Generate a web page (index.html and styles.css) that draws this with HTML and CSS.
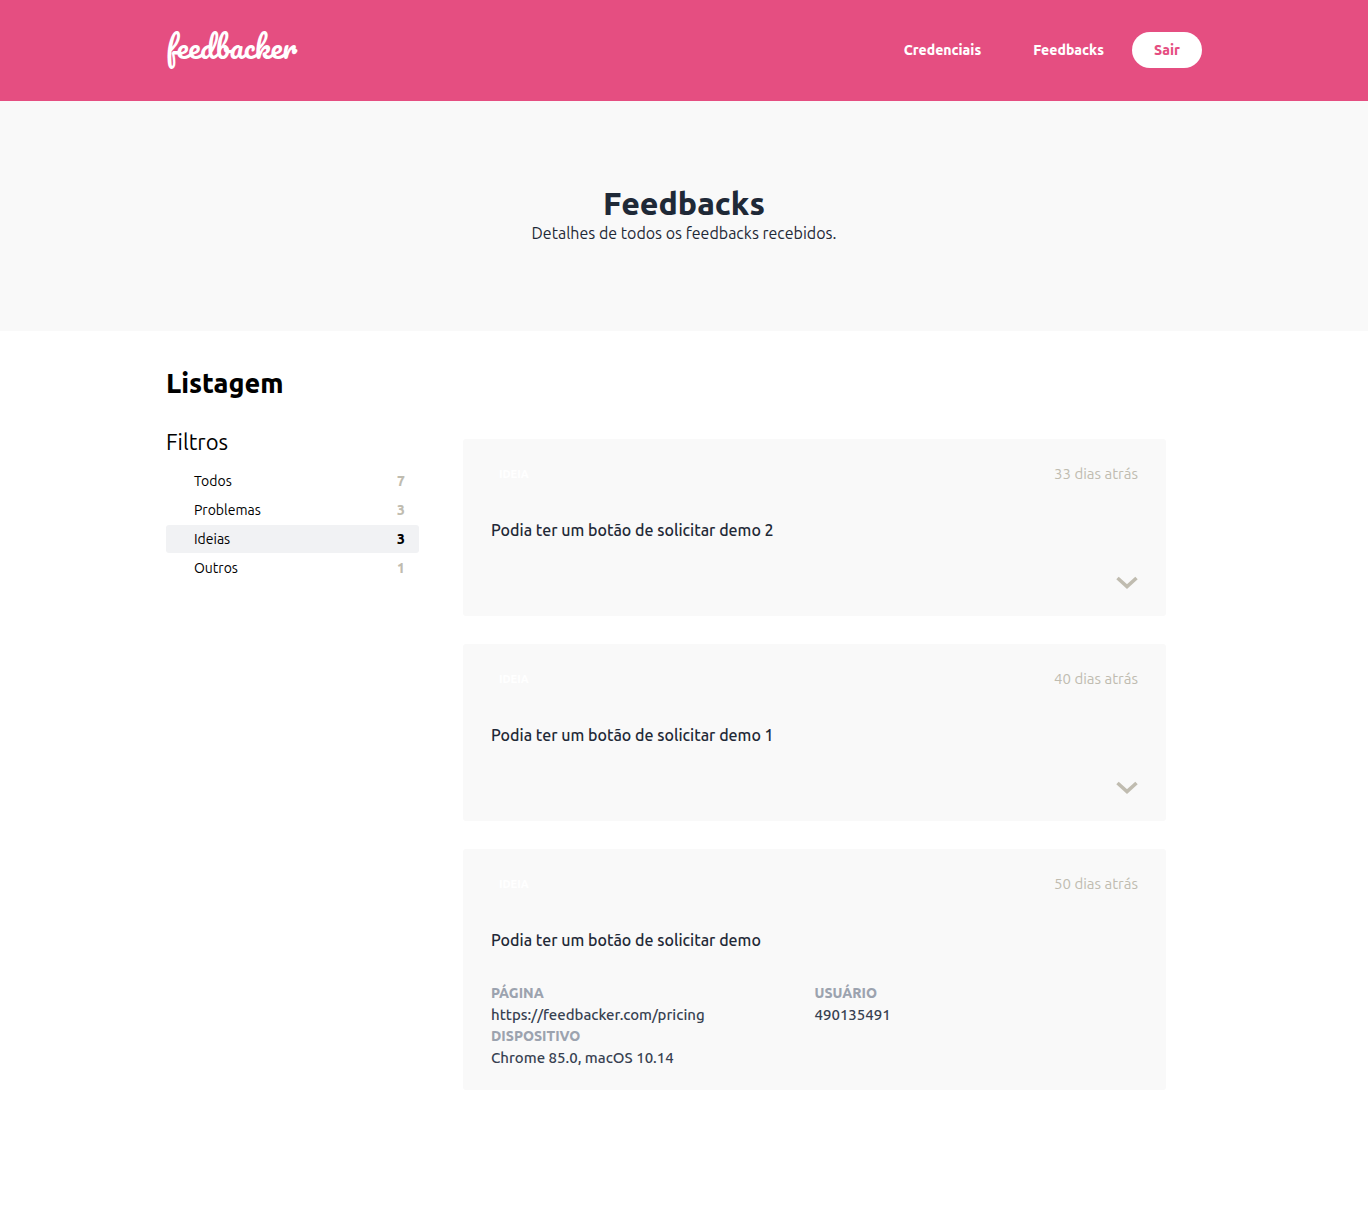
FILE: index.html
```html
<!DOCTYPE html>
<html lang="pt-BR">
<head>
  <meta charset="utf-8">
  <meta name="viewport" content="width=device-width, initial-scale=1">
  <title>Feedbacker</title>
  <link rel="stylesheet" href="styles.css">
</head>
<body>
  <header class="topbar">
    <div class="container topbar-inner">
      <a class="logo" href="#">feedbacker</a>
      <nav class="nav">
        <a class="nav-link" href="#">Credenciais</a>
        <a class="nav-link" href="#">Feedbacks</a>
        <button class="logout" type="button">Sair</button>
      </nav>
    </div>
  </header>

  <section class="hero">
    <h1 class="hero-title">Feedbacks</h1>
    <p class="hero-text">Detalhes de todos os feedbacks recebidos.</p>
  </section>

  <main class="container">
    <h2 class="list-title">Listagem</h2>
    <div class="layout">
      <aside>
        <h3 class="filters-title">Filtros</h3>
        <ul class="filters">
          <li><button class="filter" type="button"><span>Todos</span><span class="count">7</span></button></li>
          <li><button class="filter" type="button"><span>Problemas</span><span class="count">3</span></button></li>
          <li><button class="filter active" type="button"><span>Ideias</span><span class="count">3</span></button></li>
          <li><button class="filter" type="button"><span>Outros</span><span class="count">1</span></button></li>
        </ul>
      </aside>

      <div class="cards">
        <article class="card">
          <div class="card-head"><span class="badge">IDEIA</span><span class="date">33 dias atrás</span></div>
          <p class="message">Podia ter um botão de solicitar demo 2</p>
          <button class="toggle" type="button" aria-label="Ver detalhes">
            <svg width="22" height="14" viewBox="0 0 22 14"><path d="M1.5 2 11 10.500 20.500 2" fill="none" stroke="currentColor" stroke-width="3.600"/></svg>
          </button>
        </article>

        <article class="card">
          <div class="card-head"><span class="badge">IDEIA</span><span class="date">40 dias atrás</span></div>
          <p class="message">Podia ter um botão de solicitar demo 1</p>
          <button class="toggle" type="button" aria-label="Ver detalhes">
            <svg width="22" height="14" viewBox="0 0 22 14"><path d="M1.5 2 11 10.500 20.500 2" fill="none" stroke="currentColor" stroke-width="3.600"/></svg>
          </button>
        </article>

        <article class="card">
          <div class="card-head"><span class="badge">IDEIA</span><span class="date">50 dias atrás</span></div>
          <p class="message">Podia ter um botão de solicitar demo</p>
          <dl class="details">
            <div><dt>PÁGINA</dt><dd>https://feedbacker.com/pricing</dd></div>
            <div><dt>USUÁRIO</dt><dd>490135491</dd></div>
            <div><dt>DISPOSITIVO</dt><dd>Chrome 85.0, macOS 10.14</dd></div>
          </dl>
        </article>
      </div>
    </div>
  </main>
</body>
</html>
```

FILE: styles.css
```css
* {
  box-sizing: border-box;
}

body,
h1,
h2,
h3,
p,
ul,
dl,
dd {
  margin: 0;
}

body {
  background: #fff;
  color: #000;
  font-family: Ubuntu, "Noto Sans", sans-serif;
  font-size: 14px;
  line-height: 22px;
}

button {
  border: 0;
  background: none;
  color: inherit;
  font: inherit;
  cursor: pointer;
}

a {
  color: inherit;
  text-decoration: none;
}

.container {
  width: 100%;
  max-width: 1068px;
  margin: 0 auto;
  padding: 0 16px;
}

.topbar {
  background: #e54e81;
  color: #fff;
}

.topbar-inner {
  display: flex;
  align-items: flex-start;
  justify-content: space-between;
  padding-top: 28px;
  padding-bottom: 33px;
}

.logo {
  font-family: Pacifico, Lato, cursive;
  font-size: 30px;
  line-height: 38px;
}

.nav {
  display: flex;
  align-items: center;
  padding-top: 4px;
  font-weight: 800;
}

.nav-link {
  margin-right: 28px;
}

.nav-link:first-child {
  margin-right: 52px;
}

.logout {
  width: 70px;
  height: 36px;
  padding: 0;
  border-radius: 18px;
  background: #fff;
  color: #e54e81;
}

.hero {
  padding: 83px 16px 86px;
  background: #f9f9f9;
  color: #1f2937;
  text-align: center;
}

.hero-title {
  font-size: 32px;
  font-weight: 800;
  line-height: 38px;
}

.hero-text {
  font-size: 16px;
  line-height: 23px;
}

.list-title {
  padding-top: 36px;
  font-size: 27px;
  font-weight: 800;
  line-height: 32px;
}

.layout {
  display: grid;
  grid-template-columns: 253fr 703fr;
  gap: 44px;
  max-width: 1000px;
  padding-top: 28px;
  padding-bottom: 64px;
}

.filters-title {
  font-size: 22px;
  font-weight: 400;
  line-height: 30px;
}

.filters {
  display: grid;
  gap: 1px;
  padding: 10px 0 0;
  list-style: none;
}

.filter {
  display: flex;
  justify-content: space-between;
  align-items: center;
  width: 100%;
  height: 28px;
  padding: 0 14px 0 28px;
  border-radius: 3px;
}

.count {
  color: #c0bcb0;
  font-weight: 800;
}

.active {
  background: #f1f2f4;
}

.active .count {
  color: #000;
}

.cards {
  display: grid;
  gap: 28px;
  padding-top: 12px;
}

.card {
  padding: 24px 28px 22px;
  border-radius: 3px;
  background: #f9f9f9;
}

.card-head {
  display: flex;
  align-items: center;
  justify-content: space-between;
}

.badge {
  padding: 0 8px;
  color: #fff;
  font-size: 11px;
  font-weight: 800;
}

.date {
  color: #c0bcb0;
  font-size: 15px;
}

.message {
  margin-top: 32px;
  color: #1f2937;
  font-size: 16px;
  font-weight: 500;
  line-height: 26px;
}

.toggle {
  display: flex;
  align-items: center;
  height: 22px;
  margin: 29px 0 0 auto;
  padding: 0;
  color: #c0bcb0;
}

.details {
  display: grid;
  grid-template-columns: 1fr 1fr;
  margin-top: 29px;
}

.details dt {
  color: #9ca3af;
  font-weight: 800;
}

.details dd {
  color: #374151;
  font-size: 15px;
  font-weight: 500;
  line-height: 21px;
}
```
